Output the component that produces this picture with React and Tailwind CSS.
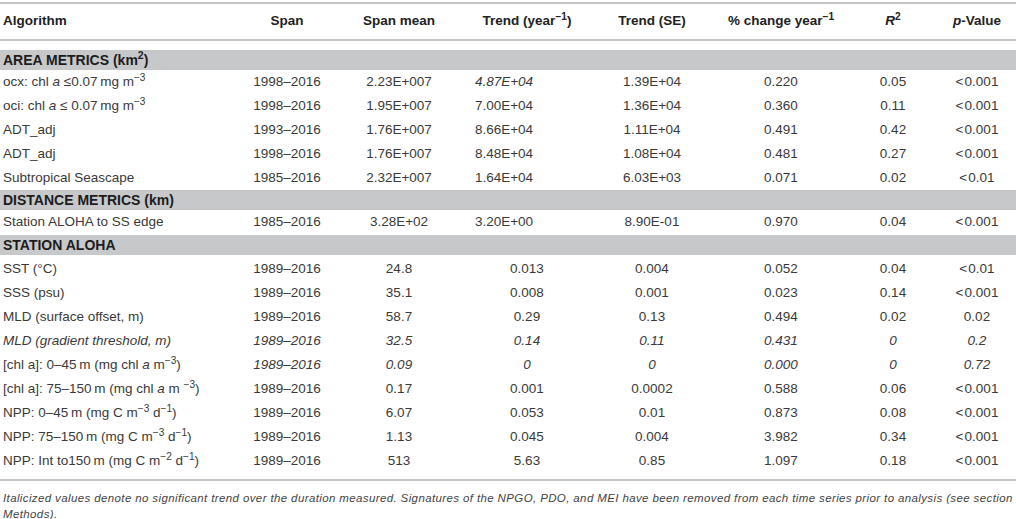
import React from "react";

const cols = "grid grid-cols-[240px_94px_130px_126px_124px_134px_90px_78px]";
const lt = "<\u200A0.001";
const lt2 = "<\u200A0.01";

const rows = [
  { section: <>AREA METRICS (km<sup>2</sup>)</> },
  { alg: <>ocx: chl <i>a</i> ≤0.07&thinsp;mg m<sup>−3</sup></>, cells: ["1998–2016", "2.23E+007", "4.87E+04", "1.39E+04", "0.220", "0.05", lt], it: "0010000" },
  { alg: <>oci: chl <i>a</i> ≤ 0.07&thinsp;mg m<sup>−3</sup></>, cells: ["1998–2016", "1.95E+007", "7.00E+04", "1.36E+04", "0.360", "0.11", lt] },
  { alg: "ADT_adj", cells: ["1993–2016", "1.76E+007", "8.66E+04", "1.11E+04", "0.491", "0.42", lt] },
  { alg: "ADT_adj", cells: ["1998–2016", "1.76E+007", "8.48E+04", "1.08E+04", "0.481", "0.27", lt] },
  { alg: "Subtropical Seascape", cells: ["1985–2016", "2.32E+007", "1.64E+04", "6.03E+03", "0.071", "0.02", lt2] },
  { section: "DISTANCE METRICS (km)" },
  { alg: "Station ALOHA to SS edge", cells: ["1985–2016", "3.28E+02", "3.20E+00", "8.90E-01", "0.970", "0.04", lt] },
  { section: "STATION ALOHA", gap: true },
  { alg: "SST (°C)", cells: ["1989–2016", "24.8", "0.013", "0.004", "0.052", "0.04", lt2] },
  { alg: "SSS (psu)", cells: ["1989–2016", "35.1", "0.008", "0.001", "0.023", "0.14", lt] },
  { alg: "MLD (surface offset, m)", cells: ["1989–2016", "58.7", "0.29", "0.13", "0.494", "0.02", "0.02"] },
  { alg: <i>MLD (gradient threshold, m)</i>, cells: ["1989–2016", "32.5", "0.14", "0.11", "0.431", "0", "0.2"], it: "1111111" },
  { alg: <>[chl a]: 0–45&thinsp;m (mg chl <i>a</i> m<sup>−3</sup>)</>, cells: ["1989–2016", "0.09", "0", "0", "0.000", "0", "0.72"], it: "1111111" },
  { alg: <>[chl a]: 75–150&thinsp;m (mg chl <i>a</i> m <sup>−3</sup>)</>, cells: ["1989–2016", "0.17", "0.001", "0.0002", "0.588", "0.06", lt] },
  { alg: <>NPP: 0–45&thinsp;m (mg C m<sup>−3</sup> d<sup>−1</sup>)</>, cells: ["1989–2016", "6.07", "0.053", "0.01", "0.873", "0.08", lt] },
  { alg: <>NPP: 75–150&thinsp;m (mg C m<sup>−3</sup> d<sup>−1</sup>)</>, cells: ["1989–2016", "1.13", "0.045", "0.004", "3.982", "0.34", lt] },
  { alg: <>NPP: Int to150&thinsp;m (mg C m<sup>−2</sup> d<sup>−1</sup>)</>, cells: ["1989–2016", "513", "5.63", "0.85", "1.097", "0.18", lt] },
];

export default function App() {
  return (
    <div className="w-[1016px] h-[519px] bg-white overflow-hidden pt-[2px] font-['Liberation_Sans',Arial,sans-serif] text-[13.5px] text-[#3a3a3a]">
      {/* header */}
      <div className={`${cols} h-[39px] items-center border-y-2 border-[#c4c4c4] font-bold text-[#222]`}>
        <div className="pl-[3px]">Algorithm</div>
        <div className="text-center">Span</div>
        <div className="text-center">Span mean</div>
        <div className="text-center">Trend (year<sup>−1</sup>)</div>
        <div className="text-center">Trend (SE)</div>
        <div className="text-center">% change year<sup>−1</sup></div>
        <div className="text-center"><i>R</i><sup>2</sup></div>
        <div className="text-center"><i>p</i>-Value</div>
      </div>

      <div className="pt-[9px]">
        {rows.map((r, i) =>
          r.section ? (
            <div
              key={i}
              className={`h-[20px] flex items-center pl-[3px] bg-[#c7c8ca] font-bold text-[#1c1c1c] text-[14px] ${r.gap ? "mt-[1px] mb-[2px]" : ""}`}
            >
              {r.section}
            </div>
          ) : (
            <div key={i} className={`${cols} h-[24px] items-center`}>
              <div className="pl-[3px] whitespace-nowrap">{r.alg}</div>
              {r.cells.map((c, j) => (
                <div
                  key={j}
                  className={`text-center whitespace-nowrap ${r.it && r.it[j] === "1" ? "italic" : ""} ${j === 2 && c.includes("E") ? "pr-[46px]" : ""}`}
                >
                  {c}
                </div>
              ))}
            </div>
          )
        )}
      </div>

      <div className="mt-[6px] border-t-2 border-[#c4c4c4] pt-[9px] pl-[3px] italic text-[11.5px] tracking-[0.38px] leading-[16px] text-[#444] whitespace-nowrap">
        Italicized values denote no significant trend over the duration measured. Signatures of the NPGO, PDO, and MEI have been removed from each time series prior to analysis (see section
        <br />
        Methods).
      </div>
    </div>
  );
}
